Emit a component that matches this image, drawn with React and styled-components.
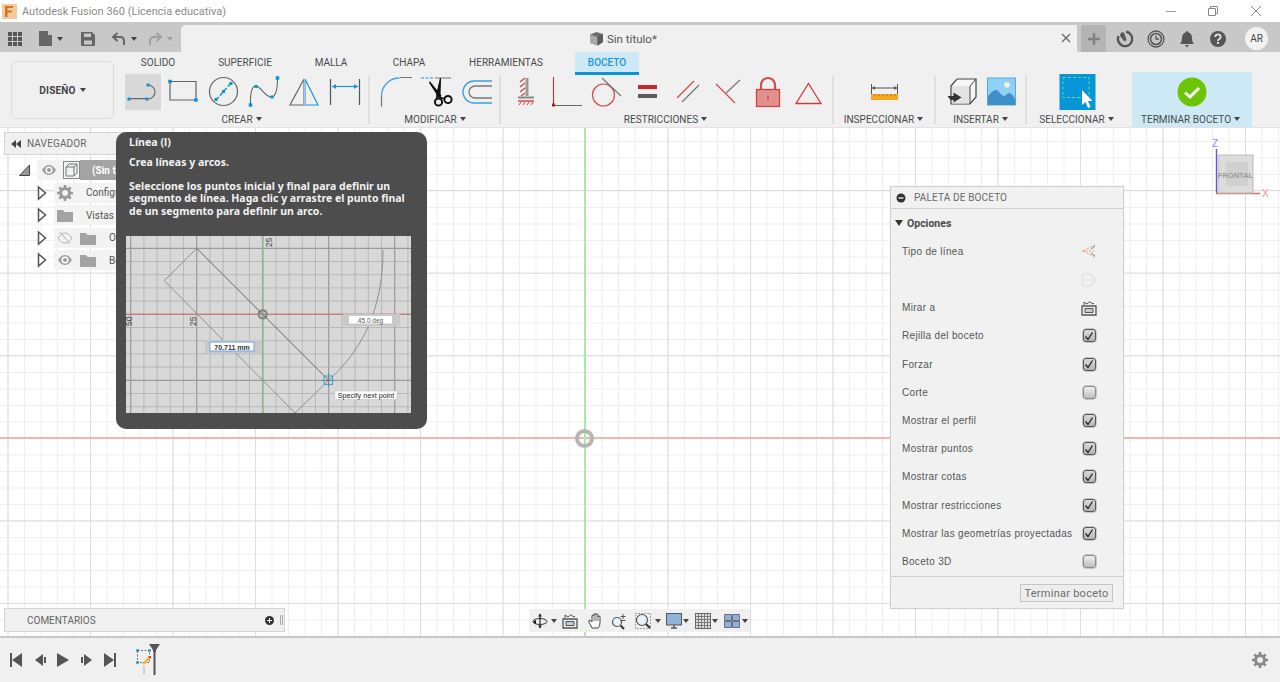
import React from "react";
import styled, { createGlobalStyle } from "styled-components";

const Global = createGlobalStyle`
  html, body { margin: 0; padding: 0; height: 100%; overflow: hidden; background: #fff; }
  #root { height: 100%; }
  * { box-sizing: border-box; }
`;

const Page = styled.div`
  height: 682px; width: 1280px; display: flex; flex-direction: column; overflow: hidden;
  font-family: Roboto, "Liberation Sans", sans-serif; color: #555;
`;

/* ---------- title bar ---------- */
const TitleBar = styled.div`
  height: 22px; flex: none; display: flex; align-items: center; padding-left: 2px; background: #fff;
`;
const AppName = styled.span`
  margin-left: 5px; font: 11px Roboto, sans-serif; letter-spacing: 0; color: #8c8c8c; white-space: nowrap;
`;
const WindowControls = styled.div`
  margin-left: auto; display: flex; align-items: center; height: 22px; padding-right: 18px; gap: 32px;
`;

/* ---------- tab bar ---------- */
const TabBar = styled.div`
  height: 30px; flex: none; display: flex; background: #c8c8c8;
`;
const LeftTools = styled.div`
  width: 181px; flex: none; display: flex; align-items: center; padding: 3px 0 0 8px;
`;
const Slot = styled.span`
  display: inline-flex; align-items: center; flex: none; margin-left: ${p => p.$ml || 0}px;
`;
const Caret = styled.span`
  flex: none; display: inline-block; width: 0; height: 0; margin-left: ${p => p.$ml || 0}px;
  border-left: 3px solid transparent; border-right: 3px solid transparent;
  border-top: 4px solid ${p => p.$c || "#444"};
`;
const DocTab = styled.div`
  width: 896px; margin-top: 3px; flex: none; background: #f0f0f0; border-radius: 5px 0 0 0;
  display: flex; align-items: center; position: relative; padding-left: 408px;
`;
const DocTitle = styled.span`
  margin-left: 3px; font-size: 11.5px; color: #555;
`;
const DocClose = styled.span`
  position: absolute; left: 880px; top: 8px; display: flex;
`;
const RightTools = styled.div`
  display: flex; align-items: center; padding-top: 3px; flex: 1;
`;
const PlusButton = styled.div`
  width: 25px; height: 27px; margin-left: 4px; background: #b4b4b4; border-radius: 3px 3px 0 0;
  display: flex; align-items: center; justify-content: center; flex: none;
`;
const Avatar = styled.div`
  width: 23px; height: 23px; border-radius: 50%; background: #f2f2f2; margin-left: 18px; flex: none;
  display: flex; align-items: center; justify-content: center; font-size: 10px; color: #444;
`;

/* ---------- ribbon ---------- */
const Ribbon = styled.div`
  height: 76px; flex: none; display: flex; background: #f0f0f0; border-bottom: 1px solid #e2e2e2;
`;
const DesignButton = styled.div`
  width: 103px; height: 58px; margin: 9px 9px 0 11px; flex: none; border: 1px solid #dcdcdc;
  border-radius: 5px; display: flex; align-items: center; justify-content: center; gap: 4px;
  font-size: 10px; font-weight: 700; color: #444; letter-spacing: .2px;
`;
const RibbonMain = styled.div`
  flex: 1; display: flex; flex-direction: column; min-width: 0;
`;
const TabRow = styled.div`
  height: 20px; flex: none; display: flex;
`;
const RibbonTab = styled.div`
  flex: none; width: ${p => p.$w}px; margin-left: ${p => p.$ml || 0}px; height: ${p => p.$active ? 23 : 20}px;
  display: flex; align-items: ${p => p.$active ? "flex-start" : "center"}; justify-content: center;
  padding-top: ${p => p.$active ? 5 : 0}px;
  font-size: 10px; color: ${p => p.$active ? "#1c96dc" : "#4a4a4a"}; font-weight: ${p => p.$active ? 500 : 400};
  background: ${p => p.$active ? "#cde9f5" : "transparent"};
  border-bottom: ${p => p.$active ? "3px solid #0696d7" : "0"};
  position: relative;
`;
const GroupRow = styled.div`
  height: 55px; flex: none; display: flex; align-items: flex-start;
`;
const Group = styled.div`
  width: ${p => p.$w}px; height: 55px; flex: none; display: flex; flex-direction: column; align-items: center;
  padding-top: 2px; background: ${p => p.$bg || "transparent"}; margin-left: ${p => p.$ml || 0}px;
`;
const Tools = styled.div`
  display: flex; gap: ${p => p.$gap ?? 4}px; height: 36px;
`;
const Tile = styled.div`
  width: 36px; height: 36px; flex: none; background: ${p => p.$active ? "#d9d9d9" : "transparent"};
`;
const GroupLabel = styled.div`
  margin-top: 2px; height: 14px; padding-right: 3px; display: flex; align-items: center; gap: 3px; white-space: nowrap;
  font-size: 10px; color: #4a4a4a; letter-spacing: .02px;
`;
const Divider = styled.div`
  width: 2px; height: 48px; margin: 4px ${p => p.$r}px 0 ${p => p.$l}px; background: #dedede; flex: none;
`;
const IconSvg = styled.svg`
  display: block; overflow: visible;
`;
const PageIcon = ({ x, y = 74, w = 36, h = 36, children }) => (
  <IconSvg viewBox={`${x} ${y} ${w} ${h}`} width={w} height={h} fill="none">{children}</IconSvg>
);
const Dot = ({ x, y, s = 4, c = "#0696d7" }) => <rect x={x - s / 2} y={y - s / 2} width={s} height={s} fill={c} />;

/* ---------- canvas ---------- */
const Canvas = styled.div`
  flex: 1; position: relative; overflow: hidden; background-color: #fff;
  background-image:
    linear-gradient(to right, #dddddd 1px, transparent 1px),
    linear-gradient(to bottom, #dddddd 1px, transparent 1px),
    linear-gradient(to right, #efefef 1px, transparent 1px),
    linear-gradient(to bottom, #efefef 1px, transparent 1px);
  background-size: 82.5px 82.6px, 82.5px 82.6px, 16.5px 16.5px, 16.5px 16.5px;
  background-position: 7.5px 62px, 7.5px 62px, 7.5px 13px, 7.5px 13px;
`;
const AxisX = styled.div`
  position: absolute; left: 0; right: 0; top: 309px; height: 2px; background: #f1b5b5;
`;
const AxisY = styled.div`
  position: absolute; top: 0; bottom: 0; left: 584px; width: 2px; background: #a8eaa8;
`;
const Origin = styled.div`
  position: absolute; left: 575px; top: 301px; width: 19px; height: 19px; border-radius: 50%;
  border: 4px solid #b5b5b5;
`;

const Navigator = styled.div`
  position: absolute; left: 4px; top: 4px; width: 280px;
`;
const PanelHeader = styled.div`
  height: 23px; background: #f0f0f0; border: 1px solid #d4d4d4; display: flex; align-items: center;
  padding-left: 5px; font-size: 10px; color: #666; letter-spacing: .15px;
`;
const HeaderName = styled.span`
  margin-left: ${p => p.$ml}px;
`;
const Tree = styled.div`
  margin-top: 4px;
`;
const TreeRow = styled.div`
  height: 22.5px; display: flex; align-items: center; padding-left: ${p => p.$pad}px;
`;
const TreeBody = styled.div`
  height: 20px; width: 180px; display: flex; align-items: center; background: #f3f3f3; margin-left: ${p => p.$ml}px;
`;
const RootName = styled.div`
  height: 20px; flex: 1; margin-left: 0; background: #a3a3a3; color: #fff; font-weight: 700; font-size: 10px;
  display: flex; align-items: center; padding-left: 12px;
`;
const TreeLabel = styled.span`
  font-size: 10px; color: #555; margin-left: ${p => p.$ml}px; white-space: nowrap;
`;

const Tooltip = styled.div`
  position: absolute; left: 116px; top: 4px; width: 311px; height: 297px; background: #4d4d4d;
  border-radius: 10px; padding-left: 10px; color: #f2f2f2;
`;
const TipTitle = styled.div`
  height: 20px; line-height: 20px; margin-left: 3px; font: 700 10.6px/20px "Noto Sans", sans-serif;
`;
const TipText = styled.div`
  margin: ${p => p.$mt || 0}px 0 0 3px; font: 700 10.5px/12.4px "Noto Sans", sans-serif; white-space: nowrap;
  height: ${p => p.$h}px; display: ${p => p.$flex ? "flex" : "block"}; align-items: center;
`;
const TipPicture = styled.svg`
  display: block; margin-top: 19px; background: #d8d8d8;
`;

const ViewCube = styled.div`
  position: absolute; left: 1211px; top: 8px;
`;

const Palette = styled.div`
  position: absolute; left: 890px; top: 58px; width: 234px; height: 423px; background: #f1f1f1;
  border: 1px solid #d0d0d0; box-shadow: 0 0 1px #ddd; display: flex; flex-direction: column;
`;
const PaletteHeader = styled.div`
  height: 22px; flex: none; border-bottom: 1px solid #d0d0d0; display: flex; align-items: center;
  padding-left: 5px; font-size: 10px; color: #6a6a6a; letter-spacing: .15px;
`;
const Section = styled.div`
  height: 28px; flex: none; display: flex; align-items: center; padding-left: 4px; gap: 4px;
  font-size: 10.5px; font-weight: 700; color: #4a4a4a; margin-top: 0;
`;
const Options = styled.div`
  flex: 1; padding-top: .4px;
`;
const OptionRow = styled.div`
  height: 28.18px; display: flex; align-items: center; justify-content: space-between;
  padding: 0 24px 0 11px; font: 10px "Liberation Sans", sans-serif; letter-spacing: .32px; color: #555;
`;
const Control = styled.div`
  width: 20px; display: flex; justify-content: center; align-items: center; flex: none;
`;
const Check = styled.div`
  width: 13px; height: 13px; border-radius: 3px; display: flex; align-items: center; justify-content: center;
  border: 1px solid ${p => p.$on ? "#555" : "#8a8a8a"};
  background: ${p => p.$on ? "linear-gradient(#dadada,#b4b4b4)" : "linear-gradient(#f0f0f0,#bdbdbd)"};
  box-shadow: 0 0 0 .5px #999;
`;
const PaletteFooter = styled.div`
  height: 32px; flex: none; border-top: 1px solid #d0d0d0; display: flex; align-items: flex-start;
  justify-content: flex-end; padding: 7px 10px 0 0;
`;
const FooterButton = styled.div`
  width: 93px; height: 18px; border: 1px solid #c4c4c4; background: #ededed; color: #6e6e6e;
  display: flex; align-items: center; justify-content: center; font-size: 11px; letter-spacing: .25px;
`;

const Comments = styled.div`
  position: absolute; left: 4px; top: 480px; width: 281px; height: 24px; background: #f0f0f0;
  border: 1px solid #d4d4d4; display: flex; align-items: center; padding-left: 22px; font-size: 10px; color: #666;
`;
const CommentTools = styled.div`
  margin-left: auto; display: flex; align-items: center; gap: 6px; padding-right: 1px;
`;
const NavBar = styled.div`
  position: absolute; left: 529px; top: 481px; width: 221px; height: 23px; background: #f0f0f0;
  display: flex; align-items: center;
`;

/* ---------- timeline ---------- */
const Timeline = styled.div`
  height: 46px; flex: none; background: #f0f0f0; border-top: 2px solid #c8c8c8;
  display: flex; align-items: center; padding: 0 12px 0 10px;
`;
const Player = styled.div`
  display: flex; gap: 11.5px; align-items: center;
`;
const Marker = styled.div`
  margin-left: 20px; display: flex;
`;
const Settings = styled.div`
  margin-left: auto; display: flex;
`;

/* ---------- small icons ---------- */
const Svg16 = ({ s = 16, w, h, children }) => (
  <IconSvg viewBox={`0 0 ${w || s} ${h || s}`} width={w || s} height={h || s} fill="none">{children}</IconSvg>
);
const CubeIcon = () => (
  <Svg16 s={15}><path d="M7.5 1 14 3v8l-5 3.5L1 12V3.5z" fill="#6d6d6d" /><path d="M1 3.5 8.5 6v8.5L1 12z" fill="#a9a9a9" /><path d="M8.5 6 14 3v8l-5.500 3.500z" fill="#5c5c5c" /></Svg16>
);
const Eye = ({ off }) => (
  <Svg16>
    <path d="M1 8c2-3.500 4.500-5 7-5s5 1.500 7 5c-2 3.500-4.500 5-7 5s-5-1.500-7-5z" fill={off ? "none" : "#a0a0a0"} stroke={off ? "#b5b5b5" : "none"} />
    {off ? <path d="M3 2l10 12" stroke="#b5b5b5" /> : <><circle cx="8" cy="8" r="3.500" fill="#fff" /><circle cx="8" cy="8" r="2" fill="#999" /></>}
  </Svg16>
);
const Folder = () => (
  <Svg16><path d="M0 3h6l1.500 2H16v10H0z" fill="#a3a3a3" /></Svg16>
);
const Gear = ({ c = "#9a9a9a" }) => (
  <Svg16>
    <circle cx="8" cy="8" r="4.500" stroke={c} strokeWidth="3" />
    <path d="M8 0v3M8 13v3M0 8h3M13 8h3M2.300 2.300l2.200 2.200M11.500 11.500l2.200 2.200M13.700 2.300l-2.200 2.200M4.500 11.500l-2.200 2.200" stroke={c} strokeWidth="2.600" />
  </Svg16>
);
const Expand = () => (
  <Svg16 w={10} h={16}><path d="M1.500 2 8.500 8l-7 6z" fill="#fff" stroke="#555" strokeWidth="1.500" /></Svg16>
);
const LookAt = () => (
  <Svg16>
    <path d="M1 6h14v9H1z" fill="#eee" stroke="#555" strokeWidth="1.300" />
    <path d="M4 8.500h8v4H4z" fill="#bcd" stroke="#555" />
    <path d="M3 5V2l3 2 3-2.500M9 2l3 2 1-1" stroke="#555" />
  </Svg16>
);
const CheckMark = () => (
  <Svg16 s={10}><path d="M1.500 5.500 4 8.500 8.500 1.500" stroke="#222" strokeWidth="1.300" /></Svg16>
);
const Minus = () => (
  <Svg16 s={10}><circle cx="5" cy="5" r="4.500" fill="#333" /><path d="M2.500 5h5" stroke="#fff" strokeWidth="1.300" /></Svg16>
);

const options = [
  ["Rejilla del boceto", true], ["Forzar", true], ["Corte", false], ["Mostrar el perfil", true],
  ["Mostrar puntos", true], ["Mostrar cotas", true], ["Mostrar restricciones", true],
  ["Mostrar las geometrías proyectadas", true], ["Boceto 3D", false],
];

const minorX = Array.from({ length: 22 }, (_, i) => 4.7 + i * 13.2);
const minorY = Array.from({ length: 14 }, (_, i) => 12.3 - 13.2 + i * 13.2);

export default function App() {
  return (
    <Page>
      <Global />
      <TitleBar>
        <Svg16 s={15}>
          <rect x="0" y="0" width="15" height="15" fill="#f3c9a0" />
          <path d="M3 2h8v2H5.500v2.500H10v2H5.500V13H3z" fill="#d9731a" />
        </Svg16>
        <AppName>Autodesk Fusion 360 (Licencia educativa)</AppName>
        <WindowControls>
          <Svg16 w={10} h={10}><path d="M0 5.500h10" stroke="#999" /></Svg16>
          <Svg16 w={10} h={10}><path d="M.5 2.500h7v7h-7zM2.500 2.500v-2h7v7h-2" stroke="#888" /></Svg16>
          <Svg16 w={12} h={12}><path d="M1 1l10 10M11 1 1 11" stroke="#888" /></Svg16>
        </WindowControls>
      </TitleBar>

      <TabBar>
        <LeftTools>
          <Svg16 s={14}>
            <path d="M0 0h4v4H0zM5 0h4v4H5zM10 0h4v4h-4zM0 5h4v4H0zM5 5h4v4H5zM10 5h4v4h-4zM0 10h4v4H0zM5 10h4v4H5zM10 10h4v4h-4z" fill="#555" />
          </Svg16>
          <Slot $ml={17}><Svg16 w={13} h={15}><path d="M0 0h9l4 4v11H0z" fill="#666" /><path d="M9 0v4h4z" fill="#c8c8c8" /></Svg16></Slot>
          <Caret $ml={5} />
          <Slot $ml={18}><Svg16 s={14}><path d="M0 1q0-1 1-1h10l3 3v10q0 1-1 1H1q-1 0-1-1z" fill="#666" /><path d="M3 1.500h7v3.500H3zM3 8.500h8v4H3z" fill="#c8c8c8" /></Svg16></Slot>
          <Slot $ml={17}><Svg16 w={13} h={14}><path d="M5.500 1 1 5l4.500 4M1.500 5H8q4 0 4 4v4" stroke="#666" strokeWidth="2" /></Svg16></Slot>
          <Caret $ml={6} />
          <Slot $ml={12}><Svg16 w={13} h={14}><path d="M7.500 1 12 5 7.500 9M11.500 5H5q-4 0-4 4v4" stroke="#a0a0a0" strokeWidth="2" /></Svg16></Slot>
          <Caret $ml={5} $c="#a0a0a0" />
        </LeftTools>
        <DocTab>
          <CubeIcon />
          <DocTitle>Sin título*</DocTitle>
          <DocClose><Svg16 s={10}><path d="M1 1l8 8M9 1 1 9" stroke="#666" strokeWidth="1.200" /></Svg16></DocClose>
        </DocTab>
        <RightTools>
          <PlusButton><Svg16 s={12}><path d="M6 0v12M0 6h12" stroke="#808080" strokeWidth="2.400" /></Svg16></PlusButton>
          <Slot $ml={10}><Svg16 w={18} h={18}><path d="M10 1.800A7.200 7.200 0 1 1 2.500 6" stroke="#555" strokeWidth="2.400" /><path d="M5 2.500h3l2.500 7.500-2 1.500L4 6z" fill="#555" /></Svg16></Slot>
          <Slot $ml={13}><Svg16 w={18} h={18}><circle cx="9" cy="9" r="8" stroke="#555" strokeWidth="1.300" /><circle cx="9" cy="9" r="5.500" stroke="#555" strokeWidth="1.600" /><path d="M9 5.500V9h3" stroke="#555" strokeWidth="1.300" /></Svg16></Slot>
          <Slot $ml={13}><Svg16 w={18} h={18}><path d="M9 1q1 0 1.500 1.500 3.500 1 3.500 5.500 0 4 2 6H2q2-2 2-6 0-4.500 3.500-5.500Q8 1 9 1z" fill="#555" /><path d="M7 15h4l-2 2.500z" fill="#555" /></Svg16></Slot>
          <Slot $ml={13}><Svg16 w={18} h={18}><circle cx="9" cy="9" r="8" fill="#555" /><path d="M6.300 7q0-2.700 2.700-2.700T11.700 7Q11.700 8.500 10 9.300q-1 .5-1 1.700" stroke="#e4e4e4" strokeWidth="1.800" /><rect x="8" y="12" width="2" height="2" fill="#e4e4e4" /></Svg16></Slot>
          <Avatar>AR</Avatar>
        </RightTools>
      </TabBar>

      <Ribbon>
        <DesignButton>DISEÑO <Caret /></DesignButton>
        <RibbonMain>
          <TabRow>
            <RibbonTab $ml={0} $w={70}>SOLIDO</RibbonTab>
            <RibbonTab $ml={0} $w={104}>SUPERFICIE</RibbonTab>
            <RibbonTab $ml={0} $w={68}>MALLA</RibbonTab>
            <RibbonTab $ml={0} $w={88}>CHAPA</RibbonTab>
            <RibbonTab $ml={0} $w={106}>HERRAMIENTAS</RibbonTab>
            <RibbonTab $ml={16} $w={64} $active>BOCETO</RibbonTab>
          </TabRow>
          <GroupRow>
            <Group $w={240}>
              <Tools>
                <Tile $active><PageIcon x={125}>
                  <path d="M129 98.700h19M148 85a7 7 0 0 1 0 14" stroke="#666" strokeWidth="1.200" />
                  <Dot x={129} y={99} s={3} /><Dot x={147} y={99} s={3} /><Dot x={148} y={85} s={3} />
                </PageIcon></Tile>
                <Tile><PageIcon x={165}>
                  <path d="M170 81.500h26V100h-26z" stroke="#666" strokeWidth="1.200" />
                  <Dot x={170} y={81.500} s={3.500} /><Dot x={196} y={100} s={3.500} />
                </PageIcon></Tile>
                <Tile><PageIcon x={205}>
                  <circle cx="223.500" cy="91.500" r="14" stroke="#666" strokeWidth="1.200" />
                  <path d="M216 100l15-17" stroke="#0696d7" strokeWidth="1.400" strokeDasharray="4 2" />
                  <Dot x={216} y={99.500} s={3} /><Dot x={223.500} y={91.500} s={3} /><Dot x={231} y={83.500} s={3} />
                </PageIcon></Tile>
                <Tile><PageIcon x={245}>
                  <path d="M250.500 105C250 92 252 86 256 86c5 0 9 12 16 11 4-1 5.500-10 5.500-19" stroke="#666" strokeWidth="1.100" />
                  <Dot x={250.500} y={105} s={3.500} /><Dot x={256} y={86.500} s={3} /><Dot x={272} y={97} s={3} /><Dot x={277.500} y={78} s={3.500} />
                </PageIcon></Tile>
                <Tile><PageIcon x={285}>
                  <path d="M304 79 290 105H304V79z" stroke="#666" strokeWidth="1.200" />
                  <path d="M305 79 318 105H305z" stroke="#1c96dc" strokeWidth="1.200" />
                  <path d="M304.500 79v26" stroke="#9ccbe6" strokeWidth="1.500" />
                </PageIcon></Tile>
                <Tile><PageIcon x={325}>
                  <path d="M330.500 79v26M359.500 79v26" stroke="#555" strokeWidth="1.200" />
                  <path d="M332 86.500h26" stroke="#1c96dc" strokeWidth="1.200" />
                  <path d="M332 86.500l4-2.500v5zM358 86.500l-4-2.500v5z" fill="#1c96dc" />
                </PageIcon></Tile>
              </Tools>
              <GroupLabel>CREAR <Caret /></GroupLabel>
            </Group>
            <Divider $l={5} $r={5} />
            <Group $w={123}>
              <Tools $gap={5}>
                <Tile><PageIcon x={377}>
                  <path d="M380.500 96c0-10 8-18 18-18" stroke="#4aa3e0" strokeWidth="1.300" />
                  <path d="M380.500 96v10.500M399 77.500h12" stroke="#777" strokeWidth="1.200" />
                </PageIcon></Tile>
                <Tile><PageIcon x={418}>
                  <path d="M420 78h12" stroke="#1c96dc" strokeDasharray="3 1.500" />
                  <path d="M434 78h16" stroke="#777" />
                  <path d="M428.500 82l10 15.500 1-2z" fill="#111" stroke="#111" strokeWidth="1.500" />
                  <path d="M439.500 78 439 95 435.500 98l.5-5z" fill="#111" stroke="#111" strokeWidth="1" />
                  <circle cx="437.500" cy="102" r="3.600" stroke="#111" strokeWidth="2" />
                  <circle cx="447" cy="99.500" r="3.600" stroke="#111" strokeWidth="2" />
                  <path d="M438 97l6 2" stroke="#111" strokeWidth="1.500" />
                </PageIcon></Tile>
                <Tile><PageIcon x={459}>
                  <path d="M491 81H473a11 11 0 0 0 0 22H491" stroke="#3a9fe0" strokeWidth="1.300" />
                  <path d="M491 86H474a6 6 0 0 0 0 12H491" stroke="#777" strokeWidth="1.300" />
                </PageIcon></Tile>
              </Tools>
              <GroupLabel>MODIFICAR <Caret /></GroupLabel>
            </Group>
            <Divider $l={1} $r={6} />
            <Group $w={320}>
              <Tools>
                <Tile><PageIcon x={509}>
                  <path d="M527 78v18" stroke="#999" strokeWidth="3" />
                  <path d="M525 78l-5 4M525 83l-5 4M525 88l-5 4M525 93l-4 3" stroke="#d43c3c" strokeWidth="1.200" />
                  <path d="M518 97.500h16" stroke="#888" strokeWidth="2" />
                  <path d="M518 101h16" stroke="#d43c3c" strokeWidth="1.400" />
                  <path d="M521 102l-2 3M525 102l-2 3M529 102l-2 3M533 102l-2 3" stroke="#d43c3c" />
                </PageIcon></Tile>
                <Tile><PageIcon x={549}>
                  <path d="M553.500 77v28" stroke="#c43030" strokeWidth="1.100" />
                  <path d="M553.500 105.500H582" stroke="#666" />
                  <Dot x={553.500} y={105} s={3} c="#c41e1e" />
                </PageIcon></Tile>
                <Tile><PageIcon x={589}>
                  <circle cx="603.500" cy="95" r="11" stroke="#d94a4a" strokeWidth="1.200" />
                  <path d="M602 78l19 18" stroke="#777" strokeWidth="1.200" />
                </PageIcon></Tile>
                <Tile><PageIcon x={629}>
                  <rect x="638" y="85" width="19" height="4" fill="#c92828" />
                  <rect x="638" y="94" width="19" height="4" fill="#5c5c5c" />
                </PageIcon></Tile>
                <Tile><PageIcon x={669}>
                  <path d="M677 98l17-17" stroke="#d94a4a" strokeWidth="1.200" />
                  <path d="M682 102l17-17" stroke="#777" strokeWidth="1.200" />
                </PageIcon></Tile>
                <Tile><PageIcon x={709}>
                  <path d="M716 84l19 19" stroke="#d94a4a" strokeWidth="1.200" />
                  <path d="M726 93l14-13" stroke="#777" strokeWidth="1.200" />
                </PageIcon></Tile>
                <Tile><PageIcon x={749}>
                  <path d="M760.500 90v-5a7 7 0 0 1 14 0v5" stroke="#d44c4c" strokeWidth="2.200" transform="translate(.5 0)" />
                  <rect x="756.500" y="89.500" width="23" height="17" fill="#e39090" stroke="#d04444" strokeWidth="1.300" />
                  <rect x="767.500" y="96" width="1" height="4" fill="#a04444" />
                </PageIcon></Tile>
                <Tile><PageIcon x={789}>
                  <path d="M808.500 83.500 821 103.500H796z" stroke="#d43c3c" strokeWidth="1.300" />
                </PageIcon></Tile>
              </Tools>
              <GroupLabel>RESTRICCIONES <Caret /></GroupLabel>
            </Group>
            <Divider $l={5} $r={11} />
            <Group $w={80}>
              <Tools>
                <Tile><PageIcon x={867}>
                  <path d="M871.500 84v10M897.500 84v10" stroke="#555" />
                  <path d="M872 88h25" stroke="#555" />
                  <path d="M872 88l3-2v4zM897 88l-3-2v4z" fill="#555" />
                  <rect x="871" y="94" width="27" height="6" fill="#f5a623" />
                  <path d="M875 94v2M879 94v2M883 94v2M887 94v2M891 94v2M895 94v2" stroke="#a56a10" strokeWidth=".8" />
                </PageIcon></Tile>
              </Tools>
              <GroupLabel>INSPECCIONAR <Caret /></GroupLabel>
            </Group>
            <Divider $l={9} $r={6} />
            <Group $w={80}>
              <Tools>
                <Tile><PageIcon x={944}>
                  <path d="M951 86l6-7h19v18l-6 7h-19z" fill="#f7f7f7" stroke="#444" strokeWidth="1.200" />
                  <path d="M952 86h17.500v17.500H952z" fill="#e3e3e6" />
                  <path d="M970 86v18M970 86l6-7" stroke="#444" />
                  <path d="M947.500 96h6v-3.500l8 5-8 5v-2.500h-3z" fill="#333" />
                </PageIcon></Tile>
                <Tile><PageIcon x={984}>
                  <rect x="987.500" y="78" width="28" height="27" fill="#8fd0f8" stroke="#5aa8d8" />
                  <circle cx="1007" cy="85" r="2.800" fill="#f8f3c0" />
                  <path d="M988 105V96c3-4 6-6 8-6 3 0 5 6 8 6 2 0 3-3 5-3s4 2 6 6v6z" fill="#3f8fc8" />
                </PageIcon></Tile>
              </Tools>
              <GroupLabel>INSERTAR <Caret /></GroupLabel>
            </Group>
            <Divider $l={3} $r={9} />
            <Group $w={84}>
              <Tools>
                <Tile><PageIcon x={1060}>
                  <rect x="1059.500" y="74" width="36" height="36" fill="#0696d7" />
                  <rect x="1063" y="77.500" width="26" height="20" stroke="#5fd6a8" strokeDasharray="3 2" />
                  <path d="M1082 90v15l3.500-3 2.500 6 2.500-1-2.500-6h4.500z" fill="#fff" />
                </PageIcon></Tile>
              </Tools>
              <GroupLabel>SELECCIONAR <Caret /></GroupLabel>
            </Group>
            <Group $w={120} $ml={12} $bg="#cde9f5">
              <Tools>
                <Tile><PageIcon x={1174}>
                  <circle cx="1192" cy="92" r="14.500" fill="#6cc404" />
                  <path d="M1185 92.500l5 4.500 9-9" stroke="#fff" strokeWidth="3" />
                </PageIcon></Tile>
              </Tools>
              <GroupLabel>TERMINAR BOCETO <Caret /></GroupLabel>
            </Group>
          </GroupRow>
        </RibbonMain>
      </Ribbon>

      <Canvas>
        <AxisX />
        <AxisY />
        <Origin />

        <Navigator>
          <PanelHeader>
            <Svg16 w={12} h={8}><path d="M6 0v8L1 4zM11 0v8L6 4z" fill="#444" /></Svg16>
            <HeaderName $ml={5}>NAVEGADOR</HeaderName>
          </PanelHeader>
          <Tree>
            <TreeRow $pad={15}>
              <Svg16 w={11} h={12}><path d="M.5 11.500 10.500 1v10.500z" fill="#999" stroke="#444" /></Svg16>
              <TreeBody $ml={7}>
                <Slot $ml={4}><Eye /></Slot>
                <Slot $ml={6}><Svg16 w={17} h={18}><rect x=".5" y=".5" width="16" height="17" fill="#f3f3f3" stroke="#888" /><path d="M3 6l3-3h8v9l-3 3H3z" fill="#eef2f6" stroke="#777" /><path d="M3 6h8v9M11 6l3-3" stroke="#777" /></Svg16></Slot>
                <RootName>(Sin título)</RootName>
              </TreeBody>
            </TreeRow>
            <TreeRow $pad={33}>
              <Expand />
              <TreeBody $ml={7}>
                <Slot $ml={3}><Gear /></Slot>
                <TreeLabel $ml={13}>Configuración del documento</TreeLabel>
              </TreeBody>
            </TreeRow>
            <TreeRow $pad={33}>
              <Expand />
              <TreeBody $ml={7}>
                <Slot $ml={3}><Folder /></Slot>
                <TreeLabel $ml={13}>Vistas con nombre</TreeLabel>
              </TreeBody>
            </TreeRow>
            <TreeRow $pad={33}>
              <Expand />
              <TreeBody $ml={7}>
                <Slot $ml={3}><Eye off /></Slot>
                <Slot $ml={7}><Folder /></Slot>
                <TreeLabel $ml={13}>Orígenes</TreeLabel>
              </TreeBody>
            </TreeRow>
            <TreeRow $pad={33}>
              <Expand />
              <TreeBody $ml={7}>
                <Slot $ml={3}><Eye /></Slot>
                <Slot $ml={7}><Folder /></Slot>
                <TreeLabel $ml={13}>Bocetos</TreeLabel>
              </TreeBody>
            </TreeRow>
          </Tree>
        </Navigator>

        <Tooltip>
          <TipTitle>Línea (l)</TipTitle>
          <TipText $h={20} $flex>Crea líneas y arcos.</TipText>
          <TipText $mt={8} $h={37}>
            Seleccione los puntos inicial y final para definir un<br />
            segmento de línea. Haga clic y arrastre el punto final<br />
            de un segmento para definir un arco.
          </TipText>
          <TipPicture viewBox="0 0 285 177" width="285" height="177" fill="none">
            {minorX.map((x, i) => (
              <path key={x} d={`M${x} 0V177`} stroke={i % 5 === 0 ? "#9a9a9a" : "#b0b0b0"} strokeWidth={i % 5 === 0 ? 1.2 : .8} />
            ))}
            {minorY.map((y, i) => (
              <path key={y} d={`M0 ${y}H285`} stroke={(i - 1) % 5 === 0 ? "#9a9a9a" : "#b0b0b0"} strokeWidth={(i - 1) % 5 === 0 ? 1.2 : .8} />
            ))}
            <path d="M0 78.300H285" stroke="#c47c7c" strokeWidth="1.200" />
            <path d="M136.700 0V177" stroke="#8fb88f" strokeWidth="1.600" />
            <circle cx="136.700" cy="78.300" r="4" stroke="#888" strokeWidth="2.400" />
            <path d="M70.700 12.300 202.700 144.300" stroke="#666" />
            <path d="M38.300 44.700 169 177M70.700 12.300 38.300 44.700M202.700 144.300 169 177" stroke="#888" strokeWidth=".9" />
            <path d="M202.700 144.300C235 115 257 75 257 14" stroke="#888" strokeWidth=".9" />
            <rect x="198" y="140" width="8.500" height="8.500" stroke="#3aa7e0" strokeWidth="1.100" />
            <path d="M202.500 137v14M195 144.500h14" stroke="#777" strokeWidth=".7" />
            <rect x="79" y="104" width="57" height="13" fill="#c9c9c9" />
            <rect x="84" y="106" width="44" height="9" fill="#fff" stroke="#6ba6df" strokeWidth="1" />
            <text x="106" y="113.500" textAnchor="middle" fontFamily="Liberation Sans" fontSize="7" fontWeight="700" fill="#333">70.711 mm</text>
            <rect x="217" y="78" width="57" height="12" fill="#c9c9c9" />
            <rect x="223" y="80" width="43" height="7.500" fill="#fff" />
            <text x="244.500" y="86.500" textAnchor="middle" fontFamily="Liberation Sans" fontSize="6.500" fill="#555">45.0 deg</text>
            <rect x="209" y="155" width="62" height="8.500" fill="#fff" stroke="#bbb" strokeWidth=".5" />
            <text x="240" y="162" textAnchor="middle" fontFamily="Liberation Sans" fontSize="7.200" fill="#222">Specify next point</text>
            <text transform="translate(145.500 11) rotate(-90)" fontFamily="Liberation Sans" fontSize="8.500" fill="#444">25</text>
            <text transform="translate(69.500 90) rotate(-90)" fontFamily="Liberation Sans" fontSize="8.500" fill="#444">25</text>
            <text transform="translate(5.500 90) rotate(-90)" fontFamily="Liberation Sans" fontSize="8.500" fill="#444">50</text>
          </TipPicture>
        </Tooltip>

        <ViewCube>
          <Svg16 w={60} h={62}>
            <path d="M5.500 13V57" stroke="#5a5ae0" strokeWidth="1.400" />
            <path d="M5 57.500H49" stroke="#e06a6a" strokeWidth="1.400" />
            <rect x="7" y="19" width="35" height="38" fill="#dcdcdc" stroke="#bbb" />
            <rect x="15" y="26" width="22" height="24" fill="#d0d0d0" />
            <text x="24.500" y="42" textAnchor="middle" fontFamily="Liberation Sans" fontSize="7.500" fontWeight="700" fill="#9a9a9a">FRONTAL</text>
            <text x="1" y="11" fontFamily="Liberation Sans" fontSize="10" fill="#8a8af0">Z</text>
            <text x="51" y="61" fontFamily="Liberation Sans" fontSize="10" fill="#f09090">X</text>
          </Svg16>
        </ViewCube>

        <Palette>
          <PaletteHeader><Minus /><HeaderName $ml={8}>PALETA DE BOCETO</HeaderName></PaletteHeader>
          <Section><Svg16 w={8} h={6}><path d="M0 0h8L4 6z" fill="#333" /></Svg16>Opciones</Section>
          <Options>
            <OptionRow>
              <span>Tipo de línea</span>
              <Control><Svg16 w={16} h={16}>
                <path d="M14 2 2 8l12 6M1 8h14" stroke="#e8a070" strokeDasharray="2 1.500" />
                <path d="M10 6l4-3M10 10l4 3" stroke="#777" />
              </Svg16></Control>
            </OptionRow>
            <OptionRow>
              <span />
              <Control><Svg16 w={16} h={16}>
                <path d="M3 2h8v3h3v6h-3v3H3q-2 0-2-2V4q0-2 2-2z" stroke="#ddd" />
                <path d="M1 8h14" stroke="#f3c9b0" strokeDasharray="2 1.500" />
              </Svg16></Control>
            </OptionRow>
            <OptionRow>
              <span>Mirar a</span>
              <Control><LookAt /></Control>
            </OptionRow>
            {options.map(([name, on]) => (
              <OptionRow key={name}>
                <span>{name}</span>
                <Control><Check $on={on}>{on && <CheckMark />}</Check></Control>
              </OptionRow>
            ))}
          </Options>
          <PaletteFooter><FooterButton>Terminar boceto</FooterButton></PaletteFooter>
        </Palette>

        <Comments>
          COMENTARIOS
          <CommentTools>
            <Svg16 s={9}><circle cx="4.500" cy="4.500" r="4.500" fill="#333" /><path d="M2 4.500h5M4.500 2v5" stroke="#fff" /></Svg16>
            <Svg16 w={3} h={10}><path d="M.5 0v10M2.500 0v10" stroke="#aaa" /></Svg16>
          </CommentTools>
        </Comments>

        <NavBar>
          <Slot $ml={3}><Svg16>
            <path d="M8 1v14" stroke="#333" strokeWidth="1.300" /><path d="M8 .5l-2 3h4zM8 15.500l-2-3h4z" fill="#333" />
            <ellipse cx="8" cy="8.500" rx="7" ry="3" stroke="#333" /><path d="M1 9l3-2v4z" fill="#111" />
          </Svg16></Slot>
          <Caret $ml={3} />
          <Slot $ml={5}><LookAt /></Slot>
          <Slot $ml={9}><Svg16>
            <path d="M5 15 2 9q-1-2 1-2l2 2V3q0-1 1-1t1 1V1.500q0-1 1-1t1 1V2q0-1 1-1t1 1v2q0-1 1-1t1 1v6q0 3-2 5z" fill="#fff" stroke="#444" />
            <path d="M7 3v5M9 2v6M11 3v5" stroke="#444" strokeWidth=".8" />
          </Svg16></Slot>
          <Slot $ml={8}><Svg16>
            <circle cx="6" cy="9" r="4.500" fill="#e8f2f8" stroke="#555" strokeWidth="1.200" />
            <path d="M9.500 12.500 13 16" stroke="#333" strokeWidth="2" />
            <path d="M12 1v5M9.500 3.500h5M9.500 7.500h5" stroke="#444" strokeWidth=".9" />
          </Svg16></Slot>
          <Slot $ml={8}><Svg16>
            <rect x=".5" y=".5" width="15" height="15" stroke="#888" strokeDasharray="1.500 1.500" />
            <circle cx="7" cy="7" r="5.500" fill="#e8f2f8" stroke="#555" strokeWidth="1.200" />
            <path d="M11 11l4 4" stroke="#333" strokeWidth="2.200" />
          </Svg16></Slot>
          <Caret $ml={4} />
          <Slot $ml={5}><Svg16>
            <rect x=".5" y=".5" width="15" height="11.500" fill="#8fb4dc" stroke="#555" />
            <path d="M5 15h6M8 12v3" stroke="#555" strokeWidth="1.400" />
          </Svg16></Slot>
          <Caret $ml={1} />
          <Slot $ml={6}><Svg16>
            <rect x=".5" y=".5" width="15" height="15" fill="#dfdfdf" stroke="#666" />
            <path d="M3.500 0v16M6.500 0v16M9.500 0v16M12.500 0v16M0 3.500h16M0 6.500h16M0 9.500h16M0 12.500h16" stroke="#666" strokeWidth=".8" />
          </Svg16></Slot>
          <Caret $ml={1} />
          <Slot $ml={6}><Svg16>
            <path d="M.5 1.500h7v6h-7zM8.500 1.500h7v6h-7zM.5 8.500h7v6h-7zM8.500 8.500h7v6h-7z" fill="#8fb0dc" stroke="#556" strokeWidth=".8" />
          </Svg16></Slot>
          <Caret $ml={2} />
        </NavBar>
      </Canvas>

      <Timeline>
        <Player>
          <Svg16 w={12} h={14}><path d="M1 0v14" stroke="#555" strokeWidth="2" /><path d="M12 0v14L2 7z" fill="#555" /></Svg16>
          <Svg16 w={12} h={14}><path d="M9 1v12L1 7z" fill="#555" /><rect x="10" y="4" width="2" height="6" fill="#555" /></Svg16>
          <Svg16 w={12} h={14}><path d="M0 0l12 7-12 7z" fill="#555" /></Svg16>
          <Svg16 w={12} h={14}><path d="M3 1v12l8-6z" fill="#555" /><rect x="0" y="4" width="2" height="6" fill="#555" /></Svg16>
          <Svg16 w={12} h={14}><path d="M0 0v14L10 7z" fill="#555" /><path d="M11 0v14" stroke="#555" strokeWidth="2" /></Svg16>
        </Player>
        <Marker>
          <Svg16 w={26} h={32}>
            <rect x="1.500" y="6.500" width="12" height="12" stroke="#777" strokeDasharray="2 1.500" />
            <Dot x={1.500} y={6.500} s={2.500} /><Dot x={13.500} y={6.500} s={2.500} /><Dot x={1.500} y={18.500} s={2.500} />
            <rect x="12.500" y="12" width="2.500" height="2.500" fill="#e33" />
            <path d="M7 20l6-6" stroke="#f3b23a" strokeWidth="2.500" />
            <path d="M8 22v8" stroke="#ccc" strokeWidth="2" />
            <path d="M13 0h11l-4 6v2h-3V6z" fill="#555" />
            <rect x="17.500" y="6" width="2" height="25" fill="#555" />
          </Svg16>
        </Marker>
        <Settings><Gear c="#8a8a8a" /></Settings>
      </Timeline>
    </Page>
  );
}
